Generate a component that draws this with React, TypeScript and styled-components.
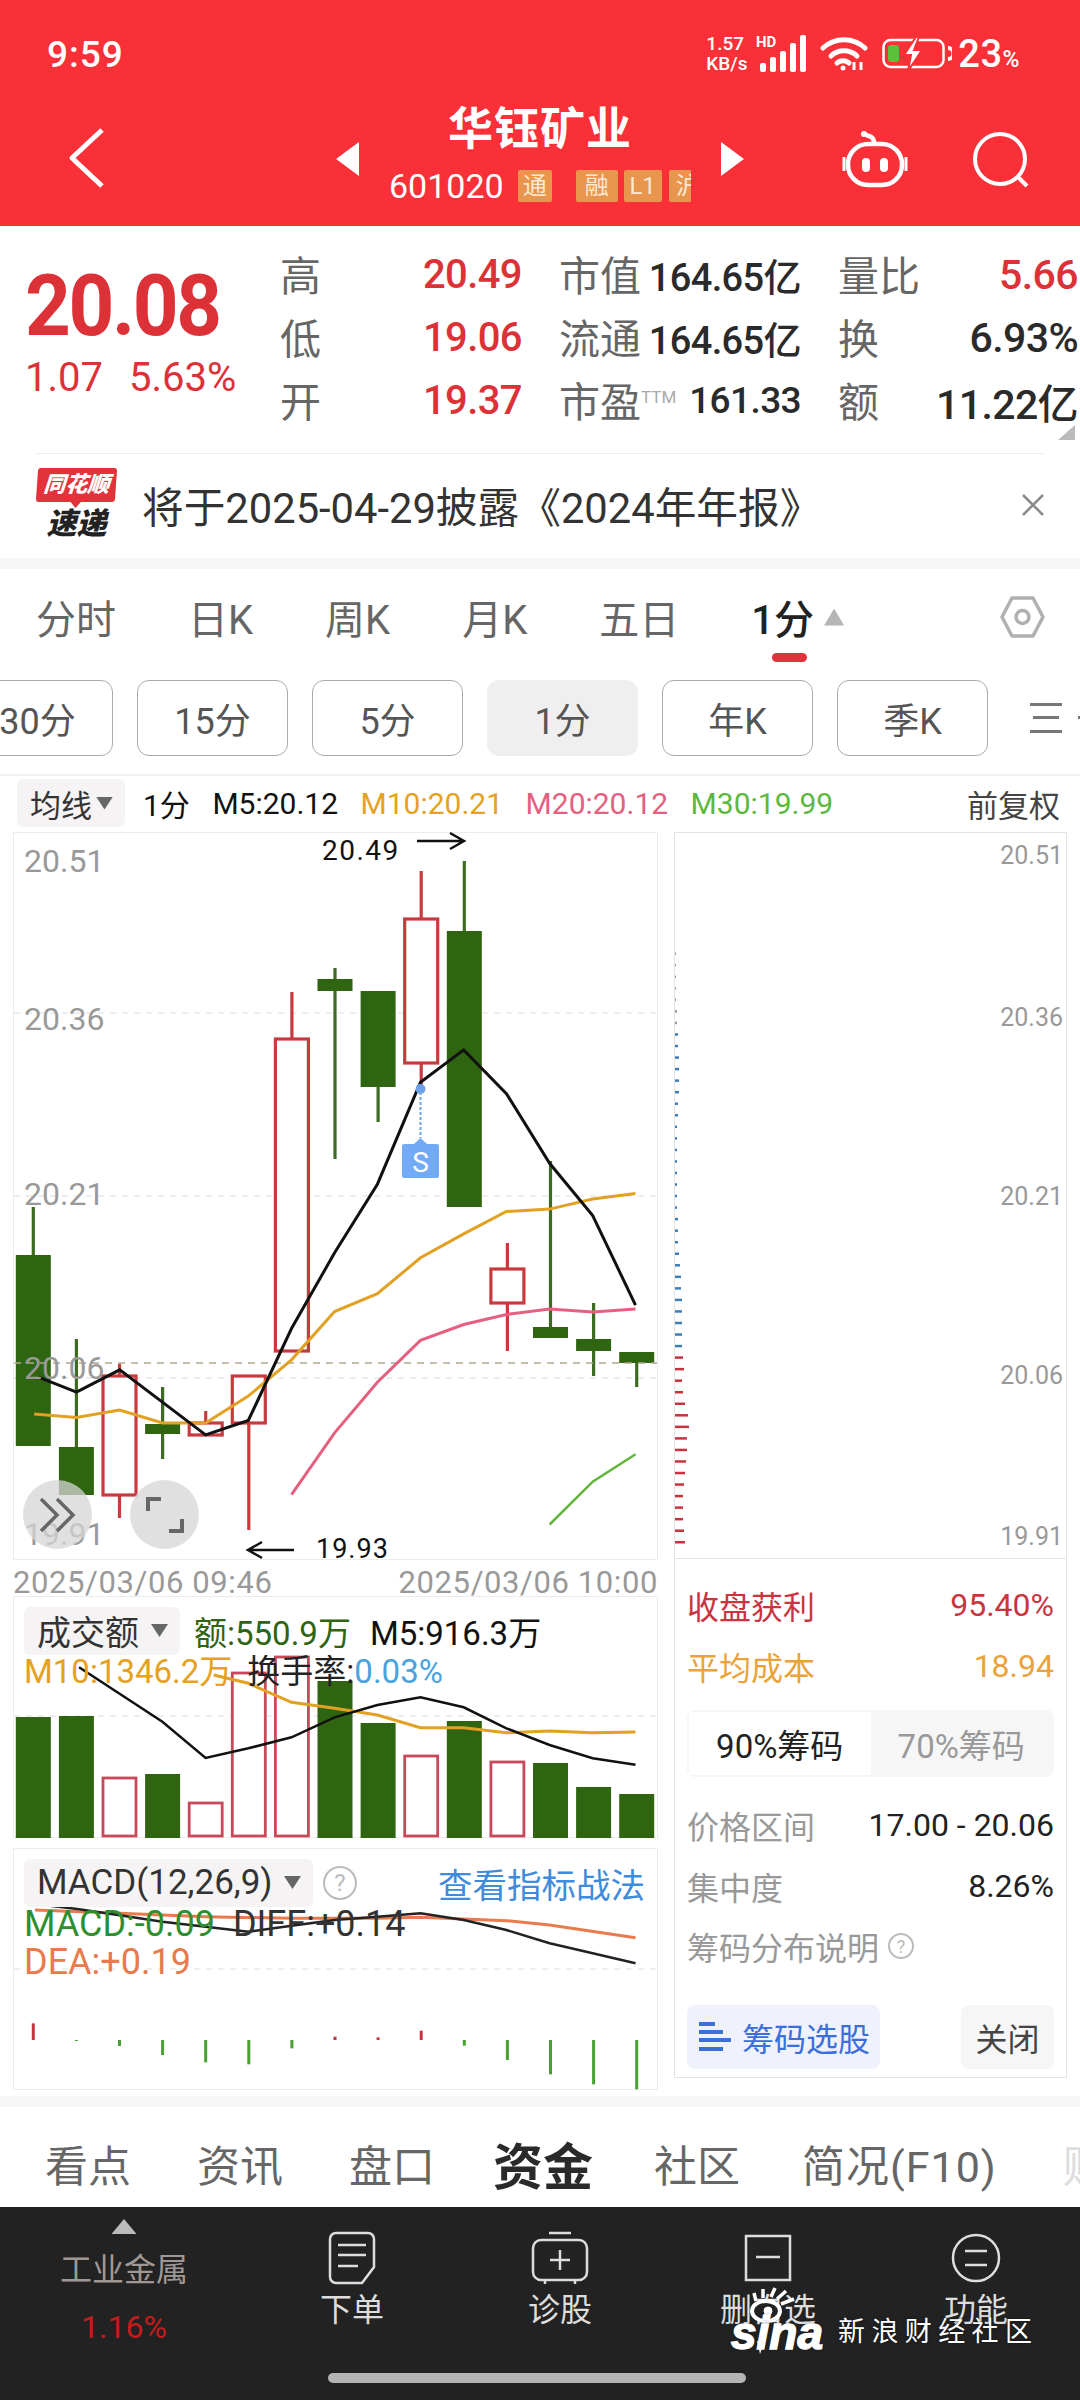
import React from 'react'
import styled, { createGlobalStyle } from 'styled-components'

const GlobalStyle = createGlobalStyle`
  html, body {
    margin: 0;
    padding: 0;
    background: #fff;
    font-family: Roboto, "Noto Sans CJK SC", sans-serif;
  }
  * { box-sizing: border-box; }
`

const RED = '#dd3138'
const GREEN = '#2f6410'
const CANDLE_RED = '#c93a3f'

const Page = styled.div`
  width: 1080px;
  height: 2400px;
  overflow: hidden;
  position: relative;
  background: #fff;
  display: flex;
  flex-direction: column;
`

/* header */
const Header = styled.header`
  height: 226px;
  background: #f93037;
  color: #fff;
  flex: none;
`
const StatusBar = styled.div`
  height: 92px;
  padding: 16px 60px 0 47px;
  display: flex;
  align-items: center;
`
const Clock = styled.div`
  font-size: 37px;
  font-weight: 500;
  letter-spacing: 1px;
`
const StatusIcons = styled.div`
  margin-left: auto;
  display: flex;
  align-items: center;
`
const Speed = styled.div`
  font-size: 19px;
  line-height: 20px;
  width: 50px;
  font-weight: 500;
`
const Percent = styled.div`
  font-size: 38px;
  font-weight: 500;
  margin-left: 6px;
  letter-spacing: 0.5px;
  span { font-size: 23px; }
`
const NavRow = styled.div`
  display: grid;
  grid-template-columns: 1fr 408px 1fr;
  height: 134px;
`
const NavLeft = styled.div`
  padding: 36px 0 0 68px;
`
const NavCenter = styled.div`
  display: flex;
  align-items: flex-start;
  justify-content: space-between;
  padding-top: 50px;
`
const NavRight = styled.div`
  display: flex;
  justify-content: flex-end;
  gap: 64px;
  padding: 36px 48px 0 0;
`
const TitleBlock = styled.div`
  width: 302px;
  margin-top: -50px;
  display: flex;
  flex-direction: column;
  align-items: center;
`
const Title = styled.div`
  font-size: 45px;
  font-weight: 700;
  line-height: 60px;
  letter-spacing: 1px;
  margin-top: 8px;
`
const CodeRow = styled.div`
  align-self: stretch;
  display: flex;
  align-items: center;
  height: 40px;
  margin-top: 6px;
  overflow: hidden;
  font-size: 34px;
  line-height: 40px;
`
const Badge = styled.span<{ $gap?: number; $w?: number }>`
  flex: none;
  display: flex;
  align-items: center;
  justify-content: center;
  height: 32px;
  width: ${p => p.$w ?? 38}px;
  margin-left: ${p => p.$gap ?? 6}px;
  border-radius: 2px;
  background: #e8954d;
  color: #fbe8d4;
  font-size: 24px;
`
const Triangle = styled.div<{ $dir: 'left' | 'right' }>`
  width: 23px;
  height: 34px;
  background: #fff;
  clip-path: ${p => (p.$dir === 'left' ? 'polygon(100% 0, 100% 100%, 0 50%)' : 'polygon(0 0, 100% 50%, 0 100%)')};
`

/* quote */
const Quote = styled.section`
  position: relative;
  display: flex;
  flex: none;
  height: 227px;
  padding: 15px 0 0 25px;
`
const PriceBlock = styled.div`
  width: 255px;
  color: ${RED};
  padding-top: 25px;
`
const BigPrice = styled.div`
  font-size: 85px;
  line-height: 80px;
  font-weight: 700;
  letter-spacing: -2.5px;
  transform: scaleX(0.94);
  transform-origin: left center;
`
const PriceChange = styled.div`
  display: flex;
  gap: 26px;
  font-size: 40px;
  line-height: 64px;
  white-space: nowrap;
`
const StatColumns = styled.div`
  display: flex;
  gap: 37px;
`
const StatColumn = styled.div`
  width: 242px;
  &:last-child { width: 240px; }
`
const Stat = styled.div`
  height: 63px;
  display: flex;
  align-items: center;
  justify-content: space-between;
  white-space: nowrap;
`
const StatLabel = styled.span`
  font-size: 41px;
  color: #666;
  sup {
    font-size: 17px;
    color: #aaa;
    vertical-align: 14px;
    line-height: 0;
  }
`
const StatValue = styled.span<{ $red?: boolean; $size?: number }>`
  font-size: ${p => p.$size ?? 38}px;
  font-weight: 500;
  letter-spacing: -0.6px;
  position: relative;
  top: 2px;
  color: ${p => (p.$red ? RED : '#2a2a2a')};
`
const CornerMark = styled.div`
  position: absolute;
  right: 5px;
  top: 199px;
  width: 17px;
  height: 15px;
  background: #bbb;
  clip-path: polygon(100% 0, 100% 100%, 0 100%);
`

/* notice */
const Notice = styled.div`
  flex: none;
  margin: 0 35px;
  height: 105px;
  border-top: 1px solid #efefef;
  display: flex;
  align-items: center;
  padding-bottom: 2px;
`
const NoticeLogo = styled.div`
  width: 81px;
  margin: 0 25px 0 1px;
  display: flex;
  flex-direction: column;
  align-items: center;
`
const LogoFlag = styled.div`
  position: relative;
  width: 79px;
  height: 34px;
  background: #e2333a;
  color: #fff;
  border-radius: 3px;
  font-size: 22px;
  line-height: 34px;
  font-weight: 900;
  font-style: italic;
  text-align: center;
  white-space: nowrap;
  transform: skewX(-4deg);
  &::after {
    content: '';
    position: absolute;
    left: 34px;
    bottom: -6px;
    width: 12px;
    height: 7px;
    background: #e2333a;
    clip-path: polygon(0 0, 100% 0, 50% 100%);
  }
`
const LogoSub = styled.div`
  font-size: 30px;
  line-height: 36px;
  margin-top: 4px;
  font-weight: 900;
  font-style: italic;
  color: #222;
`
const NoticeText = styled.div`
  font-size: 41.7px;
  color: #333;
  white-space: nowrap;
`
const NoticeClose = styled.div`
  margin-left: auto;
  display: flex;
`

const Band = styled.div<{ $h: number }>`
  flex: none;
  height: ${p => p.$h}px;
  background: #f6f6f6;
`

/* period tabs */
const Tabs = styled.nav`
  flex: none;
  height: 111px;
  display: flex;
  align-items: center;
  gap: 72px;
  padding: 0 35px 15px 36px;
  font-size: 40px;
  color: #666;
`
const Tab = styled.div<{ $active?: boolean }>`
  position: relative;
  white-space: nowrap;
  display: flex;
  align-items: center;
  gap: 10px;
  ${p => p.$active && `
    color: #222;
    font-weight: 500;
    &::after {
      content: '';
      position: absolute;
      left: 21px;
      bottom: -16px;
      width: 35px;
      height: 9px;
      border-radius: 5px;
      background: #e2333a;
    }
  `}
`
const TabCaret = styled.span`
  width: 20px;
  height: 17px;
  background: #b5b5b5;
  clip-path: polygon(50% 0, 100% 100%, 0 100%);
`
const SettingsIcon = styled.div`
  margin-left: auto;
  display: flex;
`
const Chips = styled.div`
  flex: none;
  height: 76px;
  display: flex;
  gap: 24px;
  margin-left: -38px;
`
const Chip = styled.div<{ $active?: boolean }>`
  flex: none;
  width: 151px;
  display: flex;
  align-items: center;
  justify-content: center;
  font-size: 36px;
  color: #555;
  border-radius: 12px;
  border: 1px solid ${p => (p.$active ? '#f0eff0' : '#aaa')};
  background: ${p => (p.$active ? '#f0eff0' : '#fff')};
`
const MoreLines = styled.div`
  flex: none;
  margin-left: 18px;
  display: flex;
  align-items: center;
`

/* chart legend */
const Legend = styled.div`
  flex: none;
  height: 58px;
  margin-top: 18px;
  border-top: 2px solid #f1f1f1;
  display: flex;
  align-items: center;
  gap: 22.5px;
  padding: 0 20px 2px 17px;
  font-size: 30px;
  white-space: nowrap;
`
const Dropdown = styled.div<{ $size?: number; $w: number }>`
  flex: none;
  width: ${p => p.$w}px;
  display: flex;
  align-items: center;
  justify-content: space-between;
  height: 48px;
  padding: 0 12px 0 13px;
  background: #f5f3f3;
  border-radius: 6px;
  color: #333;
  font-size: ${p => p.$size ?? 31}px;
  white-space: nowrap;
`
const DropCaret = styled.span`
  flex: none;
  width: 17px;
  height: 13px;
  background: #666;
  clip-path: polygon(0 0, 100% 0, 50% 100%);
`
const LegendItem = styled.span<{ $color?: string; $right?: boolean; $tight?: boolean }>`
  color: ${p => p.$color ?? '#111'};
  ${p => p.$tight && 'margin-left: -4.5px;'}
  ${p => p.$right && 'margin-left: auto; color: #444; font-size: 31px;'}
`

/* chart area */
const ChartArea = styled.div`
  flex: none;
  height: 1264px;
  padding-left: 13px;
  display: grid;
  grid-template-columns: 645px 393px;
  column-gap: 16px;
`
const LeftColumn = styled.div`
  display: flex;
  flex-direction: column;
`
const Panel = styled.div<{ $h: number; $gapTop?: number }>`
  position: relative;
  flex: none;
  height: ${p => p.$h}px;
  margin-top: ${p => p.$gapTop ?? 0}px;
  border: 1px solid #ececec;
  svg { display: block; overflow: visible; }
`
const DateRow = styled.div`
  flex: none;
  height: 36px;
  padding-top: 8px;
  display: flex;
  align-items: center;
  justify-content: space-between;
  color: #999;
  font-size: 31px;
  letter-spacing: 0.6px;
  white-space: nowrap;
`
const RoundButtons = styled.div`
  position: absolute;
  left: 9px;
  top: 647px;
  display: flex;
  gap: 38px;
`
const RoundButton = styled.div`
  width: 69px;
  height: 69px;
  border-radius: 50%;
  background: rgba(214, 214, 214, 0.75);
  display: flex;
  align-items: center;
  justify-content: center;
`
const Overlay = styled.div<{ $size: number }>`
  position: absolute;
  left: 10px;
  right: 12px;
  top: 10px;
  font-size: ${p => p.$size}px;
  white-space: nowrap;
`
const OverlayRow = styled.div<{ $h: number; $gap?: number; $shift?: number }>`
  display: flex;
  align-items: center;
  height: ${p => p.$h}px;
  gap: ${p => p.$gap ?? 20}px;
  margin-top: ${p => p.$shift ?? 0}px;
`
const Colored = styled.span<{ $c: string; $nudge?: number }>`
  color: ${p => p.$c};
  margin-left: ${p => p.$nudge ?? 0}px;
`
const HelpIcon = styled.span<{ $size: number; $font: number }>`
  flex: none;
  width: ${p => p.$size}px;
  height: ${p => p.$size}px;
  border: 2px solid #bbb;
  border-radius: 50%;
  color: #bbb;
  font-size: ${p => p.$font}px;
  display: inline-flex;
  align-items: center;
  justify-content: center;
`
const StrategyLink = styled.span`
  margin-left: auto;
  color: #3f8bdc;
  font-size: 34.5px;
`

/* chip panel */
const RightColumn = styled.div`
  height: 1246px;
  border: 1px solid #e4e4e4;
  display: flex;
  flex-direction: column;
`
const ChipChart = styled.div`
  flex: none;
  height: 726px;
  border-bottom: 1px solid #e4e4e4;
  svg { display: block; }
`
const ChipInfo = styled.div`
  flex: 1;
  padding: 15px 12px 0 12px;
  font-size: 32px;
`
const InfoRow = styled.div<{ $h: number; $c?: string; $labelColor?: string }>`
  height: ${p => p.$h}px;
  display: flex;
  align-items: center;
  justify-content: space-between;
  color: ${p => p.$c ?? '#222'};
  white-space: nowrap;
  > :first-child { color: ${p => p.$labelColor ?? 'inherit'}; }
`
const Segments = styled.div`
  height: 67px;
  margin: 14px 0 17px;
  padding: 2px;
  background: #f6f6f6;
  border-radius: 8px;
  display: flex;
`
const Segment = styled.div<{ $active?: boolean }>`
  flex: 1;
  display: flex;
  align-items: center;
  justify-content: center;
  font-size: 33px;
  white-space: nowrap;
  color: ${p => (p.$active ? '#222' : '#999')};
  background: ${p => (p.$active ? '#fff' : 'transparent')};
`
const HelpLine = styled.div`
  height: 60px;
  display: flex;
  align-items: center;
  gap: 9px;
  color: #999;
`
const InfoButtons = styled.div`
  margin-top: 29px;
  display: flex;
  justify-content: space-between;
`
const ScreenButton = styled.div`
  width: 193px;
  height: 64px;
  background: #eff1fb;
  border-radius: 8px;
  display: flex;
  align-items: center;
  gap: 11px;
  padding-left: 12px;
  color: #3a6fdc;
  white-space: nowrap;
`
const CloseButton = styled.div`
  width: 93px;
  height: 64px;
  background: #f6f6f6;
  border-radius: 8px;
  display: flex;
  align-items: center;
  justify-content: center;
  color: #444;
  font-size: 32px;
`

/* bottom tabs */
const SectionTabs = styled.nav`
  flex: none;
  height: 100px;
  display: flex;
  align-items: center;
  gap: 66px;
  padding: 12px 0 0 45px;
  font-size: 43px;
  color: #666;
  white-space: nowrap;
`
const SectionTab = styled.span<{ $active?: boolean; $faded?: boolean; $wide?: boolean }>`
  ${p => p.$active && 'font-size: 50px; font-weight: 700; color: #2a2a2a; margin: 0 -5px 0 -8px;'}
  ${p => p.$faded && 'color: #ddd;'}
  ${p => p.$wide && 'letter-spacing: 1px; margin-left: -4px;'}
`

/* dark bar */
const DarkBar = styled.footer`
  position: relative;
  flex: 1;
  background: #222;
  display: flex;
  flex-direction: column;
`
const BarItems = styled.div`
  height: 166px;
  display: grid;
  grid-template-columns: 248px repeat(4, 208px);
`
const BarItem = styled.div`
  display: flex;
  flex-direction: column;
  align-items: center;
  padding-top: 22px;
  color: #ddd;
  font-size: 32px;
  line-height: 46px;
  white-space: nowrap;
`
const BarIconBox = styled.div`
  height: 58px;
  display: flex;
  align-items: center;
`
const IndexCaret = styled.div`
  width: 25px;
  height: 15px;
  margin-top: -10px;
  background: #bbb;
  clip-path: polygon(50% 0, 100% 100%, 0 100%);
`
const IndexName = styled.div`
  color: #a09894;
  font-size: 32px;
  margin-top: 13px;
`
const IndexChange = styled.div`
  color: #c41c1c;
  font-size: 32px;
  margin-top: 11px;
`
const HomeIndicator = styled.div`
  width: 418px;
  height: 10px;
  margin-left: 328px;
  background: #b4b4b4;
  border-radius: 5px;
`
const Watermark = styled.div`
  position: absolute;
  left: 730px;
  top: 80px;
  display: flex;
  align-items: flex-end;
  gap: 12px;
  color: #fff;
  text-shadow: 0 0 3px rgba(0, 0, 0, 0.6);
`
const SinaLogo = styled.div`
  position: relative;
  width: 96px;
  height: 66px;
`
const SinaWord = styled.span`
  position: absolute;
  left: 1px;
  bottom: -3px;
  font-family: "Liberation Sans", sans-serif;
  font-size: 46px;
  font-weight: 700;
  font-style: italic;
  line-height: 46px;
  -webkit-text-stroke: 1.5px #fff;
`
const SinaEye = styled.svg`
  position: absolute;
  left: 20px;
  top: 0;
`
const WatermarkText = styled.span`
  font-size: 27px;
  letter-spacing: 6.4px;
  line-height: 38px;
  margin-bottom: 2px;
  white-space: nowrap;
`

/* chart data, in page pixels */
const colX = (i: number) => 33.3 + i * 43.1
const kY = (v: number) => 820 + v / 2.01
const zx = (v: number) => v / 2.34
const volY = (v: number) => 1580 + v / 3

type Candle = { top: number; bot: number; hi?: number; lo?: number; up?: boolean }
const candles: Candle[] = [
  { top: 1255, bot: 1446, hi: 1207 },
  { top: 1447, bot: 1495, hi: 1339 },
  { top: 1376, bot: 1495, hi: 1364, lo: 1518, up: true },
  { top: 1424, bot: 1434, hi: 1387, lo: 1459 },
  { top: 1423, bot: 1435, hi: 1411, up: true },
  { top: 1376, bot: 1423, lo: 1530, up: true },
  { top: 1039, bot: 1351, hi: 992, up: true },
  { top: 979, bot: 991, hi: 968, lo: 1159 },
  { top: 991, bot: 1087, lo: 1122 },
  { top: 919, bot: 1063, hi: 871, lo: 1089, up: true },
  { top: 931, bot: 1207, hi: 861 },
  { top: 1269, bot: 1303, hi: 1243, lo: 1351, up: true },
  { top: 1327, bot: 1338, hi: 1161 },
  { top: 1339, bot: 1351, hi: 1303, lo: 1376 },
  { top: 1352, bot: 1363, lo: 1387 },
]

const line = (pts: number[][], fy: (v: number) => number) =>
  pts.map(([x, y]) => `${zx(x).toFixed(1)},${fy(y).toFixed(1)}`).join(' ')

const kBlack = [[90, 1120], [179, 1150], [280, 1105], [380, 1170], [481, 1236], [581, 1207], [682, 1022], [783, 870], [883, 732], [984, 527], [1085, 462], [1185, 550], [1286, 690], [1387, 795], [1487, 975]]
const kOrange = [[80, 1194], [179, 1201], [280, 1186], [380, 1212], [481, 1212], [581, 1158], [682, 1085], [783, 988], [883, 952], [984, 880], [1085, 832], [1185, 787], [1286, 782], [1387, 762], [1487, 751]]
const kPink = [[682, 1356], [783, 1232], [883, 1130], [984, 1046], [1085, 1014], [1185, 994], [1286, 983], [1387, 989], [1487, 983]]
const kGreen = [[1286, 1416], [1387, 1330], [1487, 1275]]

const volumes = [
  { top: 1717 }, { top: 1716 }, { top: 1778, up: true }, { top: 1774 }, { top: 1803, up: true },
  { top: 1673, up: true }, { top: 1657, up: true }, { top: 1681 }, { top: 1723 }, { top: 1756, up: true },
  { top: 1721 }, { top: 1762, up: true }, { top: 1763 }, { top: 1787 }, { top: 1794 },
]
const volBlack = [[185, 262], [380, 425], [481, 534], [581, 505], [682, 472], [783, 412], [883, 375], [984, 352], [1085, 382], [1185, 445], [1286, 495], [1387, 535], [1487, 554]]
const volOrange = [[500, 285], [581, 310], [682, 367], [783, 385], [883, 405], [984, 443], [1085, 443], [1185, 458], [1286, 453], [1387, 458], [1487, 456]]

const macdBlack = [[82, 972], [181, 987], [280, 1006], [380, 1025], [481, 1040], [581, 1055], [682, 1037], [783, 1020], [883, 1010], [984, 1000], [1085, 1020], [1185, 1050], [1286, 1090], [1387, 1120], [1487, 1150]]
const macdOrange = [[82, 990], [280, 1000], [481, 1010], [682, 1015], [883, 1015], [984, 1012], [1185, 1022], [1286, 1035], [1487, 1073]]
const macdBars = [1330, 1378, 1398, 1425, 1447, 1453, 1405, 1370, 1372, 1352, 1397, 1440, 1483, 1513, 1528]

// chip distribution, top to bottom
const chipWidths = [1, 1, 1, 1, 1, 2, 2, 3, 3, 4, 4, 4, 4, 3, 3, 2, 2, 2, 2, 2, 2, 2, 2, 3, 3, 3, 4, 5, 6, 6, 7, 7, 7, 7, 7, 8, 9, 7, 8, 10, 13, 14, 12, 12, 11, 10, 9, 8, 8, 8, 9, 10]
const chipColor = (i: number, n: number) => {
  if (n - i <= 17) return '#c8323c'
  return n - i > 45 ? '#999' : '#3f7fb8'
}

const KChart = () => (
  <svg width="643" height="726" viewBox="14 833 643 726">
    {[1013, 1196, 1378].map(y => (
      <line key={y} x1="14" x2="657" y1={y} y2={y} stroke="#e9e9e9" strokeWidth="1.5" strokeDasharray="6 6" />
    ))}
    {candles.map((c, i) => {
      const x = colX(i)
      const stroke = c.up ? CANDLE_RED : '#3d6b22'
      return (
        <g key={i}>
          <line x1={x} x2={x} y1={c.hi ?? c.top} y2={c.lo ?? c.bot} stroke={stroke} strokeWidth="3.2" />
          {c.up
            ? <rect x={x - 16.5} y={c.top} width="33" height={c.bot - c.top} fill="#fff" stroke={stroke} strokeWidth="3.2" />
            : <rect x={x - 17.5} y={c.top} width="35" height={c.bot - c.top} fill={GREEN} />}
        </g>
      )
    })}
    <line x1="14" x2="657" y1="1363" y2="1363" stroke="#b5a58e" strokeWidth="1.5" strokeDasharray="7 6" />
    <polyline points={line(kOrange, kY)} fill="none" stroke="#e2a122" strokeWidth="3" />
    <polyline points={line(kPink, kY)} fill="none" stroke="#e5607f" strokeWidth="3" />
    <polyline points={line(kGreen, kY)} fill="none" stroke="#62b63c" strokeWidth="2.5" />
    <polyline points={line(kBlack, kY)} fill="none" stroke="#111" strokeWidth="3" />
    <g fontFamily="Roboto, sans-serif" fontSize="32" fill="#999">
      <text x="24" y="872">20.51</text>
      <text x="24" y="1030">20.36</text>
      <text x="24" y="1205">20.21</text>
      <text x="24" y="1379">20.06</text>
      <text x="24" y="1545">19.91</text>
    </g>
    <g fontFamily="Roboto, sans-serif" fontSize="28" fill="#111">
      <text x="322" y="860" letterSpacing="1.5">20.49</text>
      <text x="316" y="1558" fontSize="27" letterSpacing="1">19.93</text>
    </g>
    <path d="M417 841 H463 M450 833 L464 841 L450 849" fill="none" stroke="#111" strokeWidth="2.5" />
    <path d="M294 1550 H249 M262 1542 L248 1550 L262 1558" fill="none" stroke="#111" strokeWidth="2.5" />
    <circle cx="420.5" cy="1089" r="5" fill="#6d9fe8" />
    <line x1="420.5" x2="420.5" y1="1092" y2="1138" stroke="#6da3e0" strokeWidth="2" strokeDasharray="3 2" />
    <path d="M403 1144 H414 L420.5 1138 L427 1144 H437 a2 2 0 0 1 2 2 V1176 a2 2 0 0 1 -2 2 H404 a2 2 0 0 1 -2 -2 V1146 a2 2 0 0 1 2 -2 Z" fill="#72aaf5" />
    <text x="420.5" y="1172" textAnchor="middle" fontFamily="Roboto, sans-serif" fontSize="28" fill="#fff">S</text>
  </svg>
)

const VolumeChart = () => (
  <svg width="643" height="240" viewBox="14 1597 643 240">
    <line x1="14" x2="657" y1="1716" y2="1716" stroke="#e9e9e9" strokeWidth="1.5" strokeDasharray="6 6" />
    {volumes.map((b, i) => b.up
      ? <rect key={i} x={colX(i) - 16.5} y={b.top} width="33" height={1836 - b.top} fill="#fff" stroke="#c9485a" strokeWidth="2.8" />
      : <rect key={i} x={colX(i) - 17.5} y={b.top} width="35" height={1838 - b.top} fill={GREEN} />)}
    <polyline points={line(volOrange, volY)} fill="none" stroke="#e2a122" strokeWidth="3" />
    <polyline points={line(volBlack, volY)} fill="none" stroke="#111" strokeWidth="2.5" />
  </svg>
)

const MacdChart = () => (
  <svg width="643" height="240" viewBox="14 1849 643 240">
    <line x1="14" x2="657" y1="1969" y2="1969" stroke="#e9e9e9" strokeWidth="1.5" strokeDasharray="6 6" />
    <polyline points={line(macdOrange, volY)} fill="none" stroke="#e87a4c" strokeWidth="3" />
    <polyline points={line(macdBlack, volY)} fill="none" stroke="#222" strokeWidth="2.5" />
    {macdBars.map((v, i) => {
      const end = volY(v)
      const isRed = v < 1380 && i !== 1
      return <line key={i} x1={colX(i)} x2={colX(i)} y1="2040" y2={i === 1 ? 2041 : end} stroke={isRed ? '#c8323c' : '#48a030'} strokeWidth="3" />
    })}
  </svg>
)

const ChipsChart = () => (
  <svg width="391" height="725" viewBox="675 833 391 725">
    <g fontFamily="Roboto, sans-serif" fontSize="25" fill="#999" textAnchor="end">
      <text x="1063" y="864">20.51</text>
      <text x="1063" y="1026">20.36</text>
      <text x="1063" y="1205">20.21</text>
      <text x="1063" y="1384">20.06</text>
      <text x="1063" y="1545">19.91</text>
    </g>
    {chipWidths.map((w, i) => (
      <rect key={i} x="675" y={1541 - (chipWidths.length - 1 - i) * 11.54} width={w} height="2.5" fill={chipColor(i, chipWidths.length)} />
    ))}
  </svg>
)

const App = () => (
  <Page>
    <GlobalStyle />
    <Header>
      <StatusBar>
        <Clock>9:59</Clock>
        <StatusIcons>
          <Speed>1.57<br />KB/s</Speed>
          <svg width="58" height="40" viewBox="0 0 58 40" fill="#fff">
            <text x="0" y="13" fontSize="15" fontWeight="700" fontFamily="Roboto, sans-serif">HD</text>
            <rect x="4" y="29" width="6" height="9" rx="2" />
            <rect x="14" y="23" width="6" height="15" rx="2" />
            <rect x="24" y="17" width="6" height="21" rx="2" />
            <rect x="34" y="9" width="6" height="29" rx="2" />
            <rect x="44" y="1" width="6" height="37" rx="2" />
          </svg>
          <svg width="48" height="36" viewBox="0 0 48 36" fill="none" stroke="#fff" strokeWidth="5" strokeLinecap="round" style={{ marginLeft: 6 }}>
            <path d="M3 12 C15 1 33 1 45 12" />
            <path d="M11 20 C18 13 30 13 37 20" />
            <path d="M17 27 C20 24 26 24 29 27" />
            <circle cx="23" cy="32" r="2.5" fill="#fff" stroke="none" />
            <path d="M34 26 V34 M41 26 V34" strokeWidth="3" strokeLinecap="butt" />
          </svg>
          <svg width="70" height="34" viewBox="0 0 70 34" fill="none" style={{ marginLeft: 14 }}>
            <rect x="1.5" y="3" width="60" height="27" rx="7" stroke="#fff" strokeWidth="2.5" />
            <path d="M66 11 a4 4 0 0 1 0 11" stroke="#fff" strokeWidth="4" />
            <rect x="6" y="8" width="11" height="17" rx="3" fill="#57c23a" />
            <path d="M34 0 L22 18 H29 L26 34 L40 13 H32 L37 0 Z" fill="#fff" stroke="#f93037" strokeWidth="2" />
          </svg>
          <Percent>23<span>%</span></Percent>
        </StatusIcons>
      </StatusBar>
      <NavRow>
        <NavLeft>
          <svg width="37" height="60" viewBox="0 0 37 60" fill="none" stroke="#fff" strokeWidth="5">
            <path d="M34 2 L4 30 L34 58" strokeLinejoin="round" />
          </svg>
        </NavLeft>
        <NavCenter>
          <Triangle $dir="left" />
          <TitleBlock>
            <Title>华钰矿业</Title>
            <CodeRow>
              601020
              <Badge $gap={14} $w={34}>通</Badge>
              <Badge $gap={24} $w={42}>融</Badge>
              <Badge>L1</Badge>
              <Badge $gap={7} $w={38}>沪</Badge>
            </CodeRow>
          </TitleBlock>
          <Triangle $dir="right" />
        </NavCenter>
        <NavRight>
          <svg width="66" height="62" viewBox="0 0 66 62" fill="none" stroke="#fff" strokeWidth="4.5">
            <rect x="6" y="16" width="54" height="41" rx="20" />
            <path d="M2 29 V43 M64 29 V43" strokeWidth="3" />
            <path d="M32 15 C32 9 28 8 24 7" />
            <circle cx="22" cy="6" r="3" fill="#fff" stroke="none" />
            <rect x="20" y="30" width="8" height="14" rx="4" fill="#fff" stroke="none" />
            <rect x="38" y="30" width="8" height="14" rx="4" fill="#fff" stroke="none" />
          </svg>
          <svg width="60" height="60" viewBox="0 0 60 60" fill="none" stroke="#fff" strokeWidth="4">
            <circle cx="28" cy="31" r="25" />
            <path d="M46 49 L55 58" />
          </svg>
        </NavRight>
      </NavRow>
    </Header>

    <Quote>
      <PriceBlock>
        <BigPrice>20.08</BigPrice>
        <PriceChange><span>1.07</span><span>5.63%</span></PriceChange>
      </PriceBlock>
      <StatColumns>
        <StatColumn>
          <Stat><StatLabel>高</StatLabel><StatValue $red $size={40}>20.49</StatValue></Stat>
          <Stat><StatLabel>低</StatLabel><StatValue $red $size={40}>19.06</StatValue></Stat>
          <Stat><StatLabel>开</StatLabel><StatValue $red $size={40}>19.37</StatValue></Stat>
        </StatColumn>
        <StatColumn>
          <Stat><StatLabel>市值</StatLabel><StatValue>164.65亿</StatValue></Stat>
          <Stat><StatLabel>流通</StatLabel><StatValue>164.65亿</StatValue></Stat>
          <Stat><StatLabel>市盈<sup>TTM</sup></StatLabel><StatValue $size={37}>161.33</StatValue></Stat>
        </StatColumn>
        <StatColumn>
          <Stat><StatLabel>量比</StatLabel><StatValue $red $size={41}>5.66</StatValue></Stat>
          <Stat><StatLabel>换</StatLabel><StatValue $size={41}>6.93%</StatValue></Stat>
          <Stat><StatLabel>额</StatLabel><StatValue $size={41}>11.22亿</StatValue></Stat>
        </StatColumn>
      </StatColumns>
      <CornerMark />
    </Quote>

    <Notice>
      <NoticeLogo>
        <LogoFlag>同花顺</LogoFlag>
        <LogoSub>速递</LogoSub>
      </NoticeLogo>
      <NoticeText>将于2025-04-29披露《2024年年报》</NoticeText>
      <NoticeClose>
        <svg width="24" height="24" viewBox="0 0 24 24" stroke="#8a8a8a" strokeWidth="2.5">
          <path d="M2 2 L22 22 M22 2 L2 22" />
        </svg>
      </NoticeClose>
    </Notice>
    <Band $h={11} />

    <Tabs>
      <Tab>分时</Tab>
      <Tab>日K</Tab>
      <Tab>周K</Tab>
      <Tab>月K</Tab>
      <Tab>五日</Tab>
      <Tab $active>1分<TabCaret /></Tab>
      <SettingsIcon>
        <svg width="45" height="42" viewBox="0 0 45 42" fill="none" stroke="#b0b0b0" strokeWidth="3.5">
          <path d="M12 2 H33 L43 21 L33 40 H12 L2 21 Z" strokeLinejoin="round" />
          <circle cx="22.5" cy="21" r="6.5" />
        </svg>
      </SettingsIcon>
    </Tabs>

    <Chips>
      <Chip>30分</Chip>
      <Chip>15分</Chip>
      <Chip>5分</Chip>
      <Chip $active>1分</Chip>
      <Chip>年K</Chip>
      <Chip>季K</Chip>
      <MoreLines>
        <svg width="60" height="32" viewBox="0 0 60 32" fill="#777">
          <rect x="0" y="1" width="32" height="3" />
          <rect x="3" y="14" width="26" height="3" />
          <rect x="0" y="28" width="32" height="3" />
          <rect x="48" y="14" width="12" height="3" />
        </svg>
      </MoreLines>
    </Chips>

    <Legend>
      <Dropdown $w={108}>均线<DropCaret /></Dropdown>
      <LegendItem $tight>1分</LegendItem>
      <LegendItem>M5:20.12</LegendItem>
      <LegendItem $color="#e5a11f">M10:20.21</LegendItem>
      <LegendItem $color="#e5607f">M20:20.12</LegendItem>
      <LegendItem $color="#5cb83f">M30:19.99</LegendItem>
      <LegendItem $right>前复权</LegendItem>
    </Legend>

    <ChartArea>
      <LeftColumn>
        <Panel $h={728}>
          <KChart />
          <RoundButtons>
            <RoundButton>
              <svg width="42" height="36" viewBox="0 0 42 36" fill="none" stroke="#666" strokeWidth="3.5">
                <path d="M4 2 L20 18 L4 34 M20 2 L36 18 L20 34" />
              </svg>
            </RoundButton>
            <RoundButton>
              <svg width="38" height="36" viewBox="0 0 38 36" fill="none" stroke="#666" strokeWidth="4">
                <path d="M2 14 V2 H15 M36 22 V34 H23" />
              </svg>
            </RoundButton>
          </RoundButtons>
        </Panel>
        <DateRow><span>2025/03/06 09:46</span><span>2025/03/06 10:00</span></DateRow>
        <Panel $h={242}>
          <VolumeChart />
          <Overlay $size={33}>
            <OverlayRow $h={47} $gap={14}>
              <Dropdown $size={34} $w={156}>成交额<DropCaret /></Dropdown>
              <Colored $c={GREEN}>额:550.9万</Colored>
              <Colored $c="#111" $nudge={5}>M5:916.3万</Colored>
            </OverlayRow>
            <OverlayRow $h={38} $gap={18} $shift={-4}>
              <Colored $c="#e5a11f">M10:1346.2万</Colored>
              <span>
                <Colored $c="#222" $nudge={-3}>换手率:</Colored>
                <Colored $c="#4aa3dc">0.03%</Colored>
              </span>
            </OverlayRow>
          </Overlay>
        </Panel>
        <Panel $h={242} $gapTop={10}>
          <MacdChart />
          <Overlay $size={36}>
            <OverlayRow $h={47} $gap={10}>
              <Dropdown $size={35} $w={289}>MACD(12,26,9)<DropCaret /></Dropdown>
              <HelpIcon $size={34} $font={24}>?</HelpIcon>
              <StrategyLink>查看指标战法</StrategyLink>
            </OverlayRow>
            <OverlayRow $h={38} $gap={18} $shift={-1}>
              <Colored $c="#2f8f2f">MACD:-0.09</Colored>
              <Colored $c="#333">DIFF:+0.14</Colored>
            </OverlayRow>
            <OverlayRow $h={38}>
              <Colored $c="#e87a4c">DEA:+0.19</Colored>
            </OverlayRow>
          </Overlay>
        </Panel>
      </LeftColumn>

      <RightColumn>
        <ChipChart><ChipsChart /></ChipChart>
        <ChipInfo>
          <InfoRow $h={61} $c="#c9343f"><span>收盘获利</span><span>95.40%</span></InfoRow>
          <InfoRow $h={61} $c="#eaa23a"><span>平均成本</span><span>18.94</span></InfoRow>
          <Segments>
            <Segment $active>90%筹码</Segment>
            <Segment>70%筹码</Segment>
          </Segments>
          <InfoRow $h={61} $labelColor="#999"><span>价格区间</span><span>17.00 - 20.06</span></InfoRow>
          <InfoRow $h={61} $labelColor="#999"><span>集中度</span><span>8.26%</span></InfoRow>
          <HelpLine>筹码分布说明<HelpIcon $size={26} $font={18}>?</HelpIcon></HelpLine>
          <InfoButtons>
            <ScreenButton>
              <svg width="32" height="30" viewBox="0 0 32 30" fill="#3a6fdc">
                <rect x="0" y="0" width="16" height="4" />
                <rect x="0" y="8" width="24" height="4" />
                <rect x="0" y="16" width="32" height="4" />
                <rect x="0" y="25" width="24" height="4" />
              </svg>
              筹码选股
            </ScreenButton>
            <CloseButton>关闭</CloseButton>
          </InfoButtons>
        </ChipInfo>
      </RightColumn>
    </ChartArea>

    <Band $h={11} />
    <SectionTabs>
      <span>看点</span>
      <span>资讯</span>
      <span>盘口</span>
      <SectionTab $active>资金</SectionTab>
      <span>社区</span>
      <SectionTab $wide>简况(F10)</SectionTab>
      <SectionTab $faded>财务</SectionTab>
    </SectionTabs>

    <DarkBar>
      <BarItems>
        <BarItem>
          <IndexCaret />
          <IndexName>工业金属</IndexName>
          <IndexChange>1.16%</IndexChange>
        </BarItem>
        <BarItem>
          <BarIconBox>
            <svg width="48" height="54" viewBox="0 0 48 54" fill="none" stroke="#ddd" strokeWidth="2.5">
              <path d="M8 2 H40 a6 6 0 0 1 6 6 V36 L34 52 H8 a6 6 0 0 1 -6 -6 V8 a6 6 0 0 1 6 -6 Z" />
              <path d="M10 14 H38 M10 24 H38 M10 35 H30" />
            </svg>
          </BarIconBox>
          下单
        </BarItem>
        <BarItem>
          <BarIconBox>
            <svg width="58" height="54" viewBox="0 0 58 54" fill="none" stroke="#ddd" strokeWidth="2.5">
              <path d="M18 2 H40" />
              <rect x="2" y="9" width="54" height="40" rx="8" />
              <path d="M29 19 V39 M19 29 H39 M14 49 V53 M44 49 V53" />
            </svg>
          </BarIconBox>
          诊股
        </BarItem>
        <BarItem>
          <BarIconBox>
            <svg width="48" height="48" viewBox="0 0 48 48" fill="none" stroke="#ddd" strokeWidth="2.5">
              <rect x="2" y="2" width="44" height="44" />
              <path d="M12 23 H36" />
            </svg>
          </BarIconBox>
          删自选
        </BarItem>
        <BarItem>
          <BarIconBox>
            <svg width="50" height="50" viewBox="0 0 50 50" fill="none" stroke="#ddd" strokeWidth="2.5">
              <circle cx="25" cy="25" r="23" />
              <path d="M14 18 H36 M14 32 H36" />
            </svg>
          </BarIconBox>
          功能
        </BarItem>
      </BarItems>
      <HomeIndicator />
      <Watermark>
        <SinaLogo>
          <SinaEye width="48" height="68" viewBox="0 0 48 68" fill="none" stroke="#fff">
            <ellipse cx="16" cy="24" rx="14" ry="10" strokeWidth="4" fill="#222" />
            <circle cx="18" cy="24" r="4" fill="#fff" strokeWidth="1" />
            <path d="M6 14 L4 6 M13 11 L13 2 M21 10 L25 1 M27 12 L36 4 M31 17 L44 12" strokeWidth="3.5" />
            <polygon points="7,54 10,67 15,54" fill="#fff" stroke="none" />
          </SinaEye>
          <SinaWord>sina</SinaWord>
        </SinaLogo>
        <WatermarkText>新浪财经社区</WatermarkText>
      </Watermark>
    </DarkBar>
  </Page>
)

export default App
